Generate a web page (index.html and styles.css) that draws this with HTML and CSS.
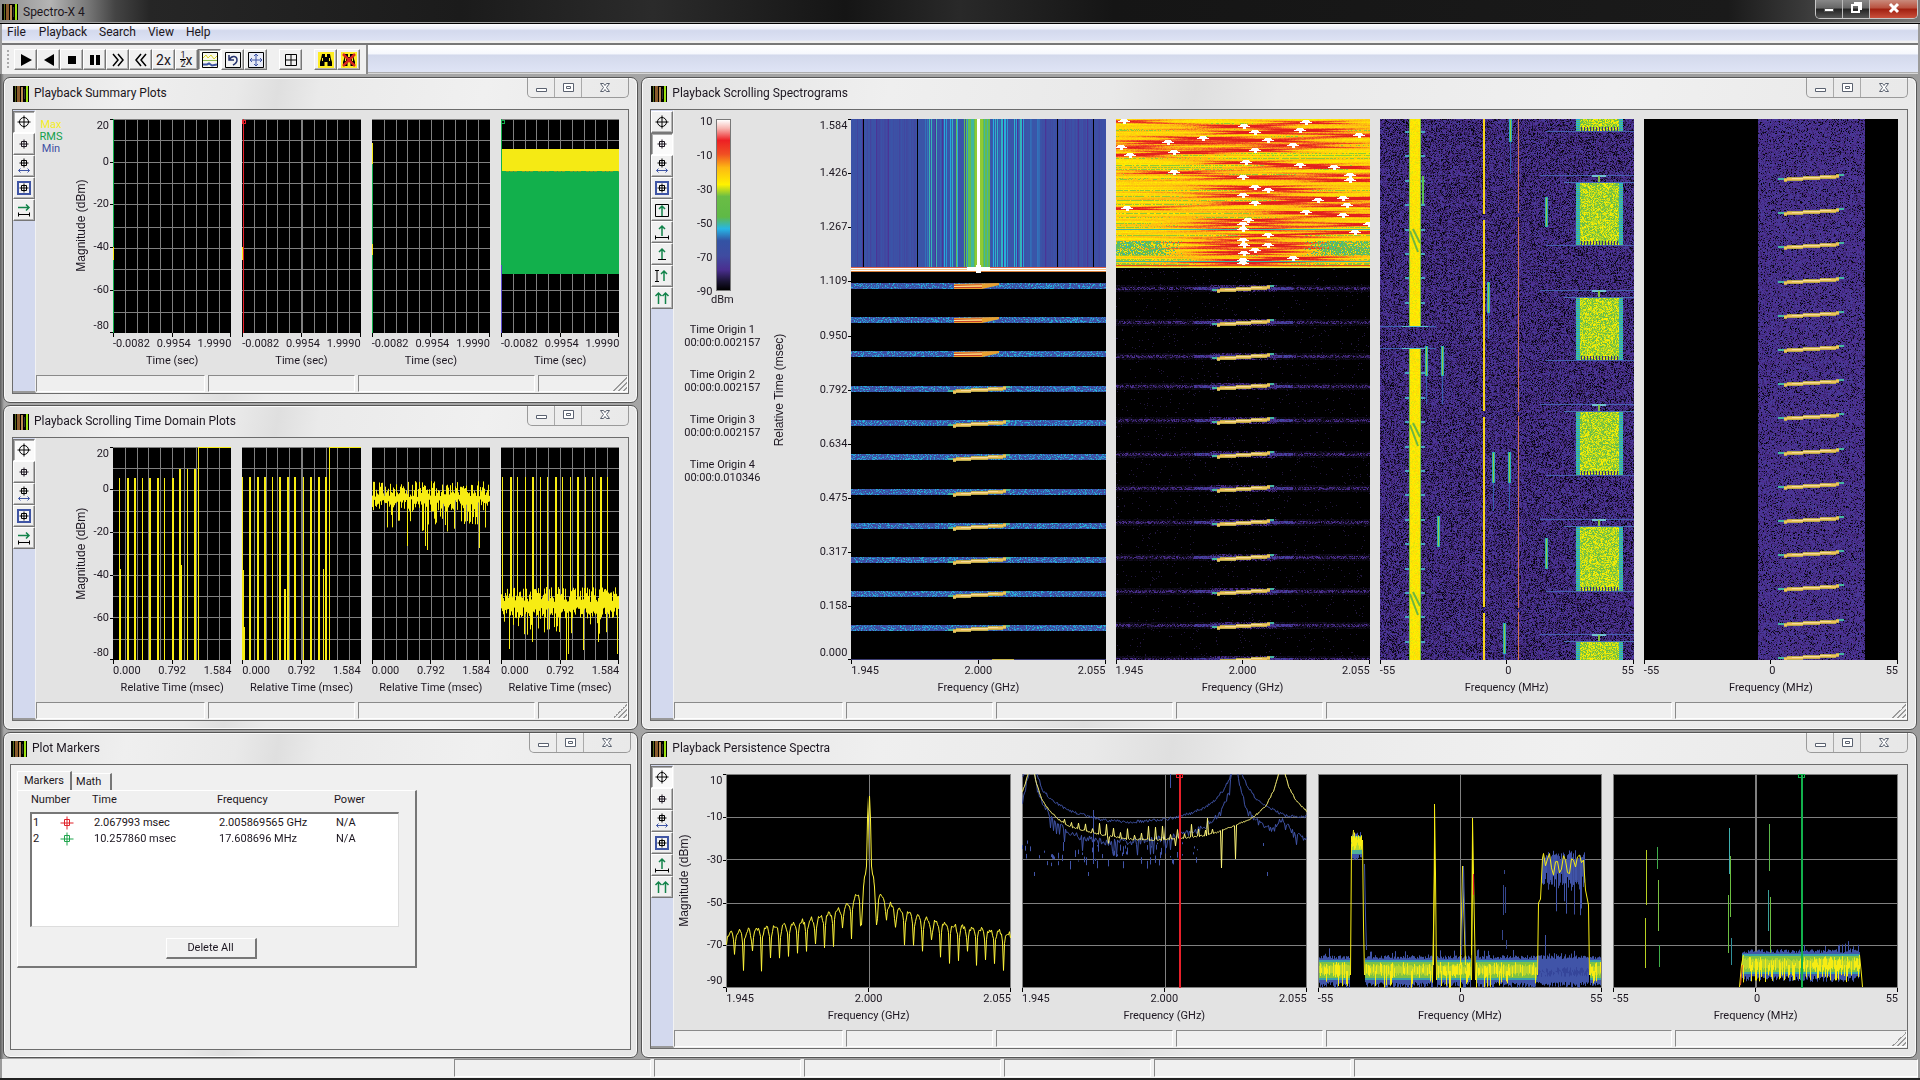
FILE: index.html
```html
<!DOCTYPE html>
<html lang="en">
<head>
<meta charset="utf-8">
<title>Spectro-X 4</title>
<link rel="stylesheet" href="styles.css">
</head>
<body>
<svg class="defs" aria-hidden="true">
  <symbol id="app" viewBox="0 0 16 16"><path fill="#000" d="M0 0h16v16H0z"/><path fill="#5a6a1c" d="M2 0h1v16H2z"/><path fill="#8a5a2c" d="M4 0h3v16H4z"/><path fill="#b98a50" d="M8 1h2v15H8z"/><path fill="#333" d="M11 3h1v10h-1z"/><path fill="#9be312" d="M13 0h2v16h-2z"/></symbol>
  <symbol id="target" viewBox="0 0 16 16"><circle cx="8" cy="8" r="4.5" fill="none" stroke="#000"/><path d="M8 1.500v13M1.500 8h13" stroke="#000"/></symbol>
  <symbol id="mark" viewBox="0 0 16 16"><path d="M5.500 5.500h5v5h-5zM8 3.500v9M3.500 8h9" stroke="currentColor" fill="none"/></symbol>
  <symbol id="marker" viewBox="0 0 16 16"><path d="M5.500 4.500h5v6h-5zM8 1.500v13M1.500 8h13" stroke="currentColor" fill="none"/></symbol>
  <symbol id="span" viewBox="0 0 16 16"><path d="M5.500 2.500h5v5h-5zM8 .5v9M3.500 5h9" stroke="#000" fill="none"/><path d="M2.500 12.500h11M4.500 10.500l-2 2 2 2M11.500 10.500l2 2-2 2" stroke="#3f55a5" fill="none"/></symbol>
  <symbol id="boxed" viewBox="0 0 16 16"><path d="M2 2h12v12H2z" fill="#f4f4f4" stroke="#3f55a5" stroke-width="2"/><path d="M5.500 5.500h5v5h-5zM8 3.500v9M3.500 8h9" stroke="#000" fill="none"/></symbol>
  <symbol id="rangex" viewBox="0 0 16 16"><path d="M2 5.500h11M10 2.500l3 3-3 3" stroke="#12834a" stroke-width="1.500" fill="none"/><path d="M2.500 10.500v4M13.500 10.500v4M2 12.500h12" stroke="#000" fill="none"/></symbol>
  <symbol id="upbox" viewBox="0 0 16 16"><path d="M1.500 2.500h13v12h-13z" stroke="#000" fill="none"/><path d="M8 14V4M5 7l3-3 3 3" stroke="#12834a" stroke-width="1.500" fill="none"/></symbol>
  <symbol id="upwide" viewBox="0 0 16 16"><path d="M1.500 11.500v4M14.500 11.500v4M1 13.500h14" stroke="#000" fill="none"/><path d="M8 12V2M5 5l3-3 3 3" stroke="#12834a" stroke-width="1.500" fill="none"/></symbol>
  <symbol id="upshort" viewBox="0 0 16 16"><path d="M4 13.500h8" stroke="#000"/><path d="M8 13V3M5 6l3-3 3 3" stroke="#12834a" stroke-width="1.500" fill="none"/></symbol>
  <symbol id="upbeam" viewBox="0 0 16 16"><path d="M1 2.500h4M3 2.500v11M1 13.500h4" stroke="#000"/><path d="M10 13V3M7 6l3-3 3 3" stroke="#12834a" stroke-width="1.500" fill="none"/></symbol>
  <symbol id="uptwo" viewBox="0 0 16 16"><path d="M4.500 14V3M1.500 6l3-3 3 3M11.500 14V3M8.500 6l3-3 3 3" stroke="#12834a" stroke-width="1.500" fill="none"/></symbol>
  <symbol id="min" viewBox="0 0 16 16"><path d="M3.500 8.500h10v3h-10z" fill="#fff" stroke="#5b6270"/></symbol>
  <symbol id="max" viewBox="0 0 16 16"><path d="M3.500 3.500h10v8h-10zM6.500 6.500h4v2h-4z" fill="#fff" stroke="#5b6270"/></symbol>
  <symbol id="close" viewBox="0 0 16 16"><path d="M3.500 3.500h3l1.500 2 1.500-2h3l-3 4 3 4h-3L8 9.500l-1.500 2h-3l3-4z" fill="#fff" stroke="#5b6270"/></symbol>
  <symbol id="binos" viewBox="0 0 16 16"><path fill="#ffed22" d="M0 0h16v16H0z"/><path d="M4 2h3v3h2V2h3l1 5 1 3v4H9.500v-4h-3v4H2v-4l1-3z"/><path fill="#ffed22" d="M4 6h1v3H4zM11 6h1v3h-1z"/></symbol>
</svg>

<div class="app">
  <header class="titlebar">
    <svg class="icon"><use href="#app"/></svg>
    <h1>Spectro-X 4</h1>
    <div class="sysbtns">
      <button aria-label="Minimize"><svg viewBox="0 0 16 16"><path d="M3.500 8.500h9v3h-9z" fill="#fff" stroke="#555"/></svg></button>
      <button aria-label="Restore"><svg viewBox="0 0 16 16"><path d="M6 3h7v7M4 5h7v7H4z" fill="none" stroke="#fff" stroke-width="2"/></svg></button>
      <button class="quit" aria-label="Close"><svg viewBox="0 0 16 16"><path d="M4 4l8 8M12 4l-8 8" stroke="#fff" stroke-width="3"/></svg></button>
    </div>
  </header>
  <nav class="menu">
    <button>File</button><button>Playback</button><button>Search</button><button>View</button><button>Help</button>
  </nav>
  <div class="toolbar">
    <div class="tools">
      <i class="grip"></i>
      <button aria-label="Play"><svg viewBox="0 0 16 16"><path d="M3 2l11 6-11 6z"/></svg></button>
      <button aria-label="Play reverse"><svg viewBox="0 0 16 16"><path d="M13 2L3 8l10 6z"/></svg></button>
      <button aria-label="Stop"><svg viewBox="0 0 16 16"><path d="M4 4h8v8H4z"/></svg></button>
      <button aria-label="Pause"><svg viewBox="0 0 16 16"><path d="M3 3h4v10H3zM9 3h4v10H9z"/></svg></button>
      <button aria-label="Forward"><svg viewBox="0 0 16 16"><path d="M3 2l5 6-5 6M8 2l5 6-5 6" fill="none" stroke="#000" stroke-width="1.500"/></svg></button>
      <button aria-label="Back"><svg viewBox="0 0 16 16"><path d="M8 2L3 8l5 6M13 2L8 8l5 6" fill="none" stroke="#000" stroke-width="1.500"/></svg></button>
      <button class="speed">2x</button>
      <button class="speed" aria-label="Half speed"><span class="frac"><span>1</span><span>2</span></span>x</button>
      <button class="on" aria-label="Plots"><svg viewBox="0 0 16 16"><path d="M.5.500h15v15H.5z" fill="#f7f7ea" stroke="#000"/><path d="M1 6l3-3 2 3 3-3 3 4 3-3" fill="none" stroke="#d8d22a"/><path d="M1 8.500h14" stroke="#89b84a"/><path d="M1 12.500h4l2-1 3 2 5-1" fill="none" stroke="#3f55a5" stroke-width="2"/></svg></button>
      <button aria-label="Undo zoom"><svg viewBox="0 0 16 16"><path d="M.5.500h15v15H.5z" fill="#f4f4f4" stroke="#000"/><path d="M4 3v5h5M4.500 7.500C7 3 12 4 12 8c0 3-2 4-4 5" fill="none" stroke="#27346f" stroke-width="1.500"/></svg></button>
      <button aria-label="Full extent"><svg viewBox="0 0 16 16"><path d="M.5.500h15v15H.5z" fill="#e8ebf6" stroke="#000"/><path d="M8 2v12M2 8h12M6 4l2-2 2 2M6 12l2 2 2-2M4 6L2 8l2 2M12 6l2 2-2 2" fill="none" stroke="#3f55a5"/></svg></button>
      <button class="apart" aria-label="Tile"><svg viewBox="0 0 16 16"><path d="M2.500 2.500h11v11h-11zM8 2v12M2 8h12" fill="none" stroke="#000"/></svg></button>
      <button class="apart" aria-label="Find"><svg><use href="#binos"/></svg></button>
      <button aria-label="Cancel find"><svg viewBox="0 0 16 16"><use href="#binos"/><path d="M2 2l12 12M14 2L2 14" stroke="#d8281e" stroke-width="2.500"/></svg></button>
    </div>
  </div>

  <main class="mdi">
    <section class="win summary">
      <header><svg class="icon"><use href="#app"/></svg><h2>Playback Summary Plots</h2>
        <div class="winbtns"><button aria-label="Minimize"><svg><use href="#min"/></svg></button><button aria-label="Maximize"><svg><use href="#max"/></svg></button><button aria-label="Close"><svg><use href="#close"/></svg></button></div></header>
      <div class="client">
        <div class="strip">
          <button class="on" aria-label="Marker mode"><svg><use href="#target"/></svg></button>
          <button aria-label="Marker"><svg><use href="#mark"/></svg></button>
          <button aria-label="Span"><svg><use href="#span"/></svg></button>
          <button aria-label="Region"><svg><use href="#boxed"/></svg></button>
          <button aria-label="Scroll"><svg><use href="#rangex"/></svg></button>
        </div>
        <div class="pane">
          <div class="chart">
            <ul class="side legend"><li class="c-max">Max</li><li class="c-rms">RMS</li><li class="c-min">Min</li></ul>
            <div class="ylabel">Magnitude (dBm)</div>
            <div class="yaxis"><span>20</span><span>0</span><span>-20</span><span>-40</span><span>-60</span><span>-80</span></div>
            <div class="plots">
              <figure><canvas id="s1" width="118" height="213"></canvas><div class="xaxis"><span>-0.0082</span><span>0.9954</span><span>1.9990</span></div><figcaption>Time (sec)</figcaption></figure>
              <figure><canvas id="s2" width="118" height="213"></canvas><div class="xaxis"><span>-0.0082</span><span>0.9954</span><span>1.9990</span></div><figcaption>Time (sec)</figcaption></figure>
              <figure><canvas id="s3" width="118" height="213"></canvas><div class="xaxis"><span>-0.0082</span><span>0.9954</span><span>1.9990</span></div><figcaption>Time (sec)</figcaption></figure>
              <figure><canvas id="s4" width="118" height="213"></canvas><div class="xaxis"><span>-0.0082</span><span>0.9954</span><span>1.9990</span></div><figcaption>Time (sec)</figcaption></figure>
            </div>
          </div>
          <div class="cells narrow"><i></i><i></i><i></i><i class="resize"></i></div>
        </div>
      </div>
    </section>

    <section class="win timedomain">
      <header><svg class="icon"><use href="#app"/></svg><h2>Playback Scrolling Time Domain Plots</h2>
        <div class="winbtns"><button aria-label="Minimize"><svg><use href="#min"/></svg></button><button aria-label="Maximize"><svg><use href="#max"/></svg></button><button aria-label="Close"><svg><use href="#close"/></svg></button></div></header>
      <div class="client">
        <div class="strip">
          <button class="on" aria-label="Marker mode"><svg><use href="#target"/></svg></button>
          <button aria-label="Marker"><svg><use href="#mark"/></svg></button>
          <button aria-label="Span"><svg><use href="#span"/></svg></button>
          <button aria-label="Region"><svg><use href="#boxed"/></svg></button>
          <button aria-label="Scroll"><svg><use href="#rangex"/></svg></button>
        </div>
        <div class="pane">
          <div class="chart">
            <div class="side"></div>
            <div class="ylabel">Magnitude (dBm)</div>
            <div class="yaxis"><span>20</span><span>0</span><span>-20</span><span>-40</span><span>-60</span><span>-80</span></div>
            <div class="plots">
              <figure><canvas id="t1" width="118" height="213"></canvas><div class="xaxis"><span>0.000</span><span>0.792</span><span>1.584</span></div><figcaption>Relative Time (msec)</figcaption></figure>
              <figure><canvas id="t2" width="118" height="213"></canvas><div class="xaxis"><span>0.000</span><span>0.792</span><span>1.584</span></div><figcaption>Relative Time (msec)</figcaption></figure>
              <figure><canvas id="t3" width="118" height="213"></canvas><div class="xaxis"><span>0.000</span><span>0.792</span><span>1.584</span></div><figcaption>Relative Time (msec)</figcaption></figure>
              <figure><canvas id="t4" width="118" height="213"></canvas><div class="xaxis"><span>0.000</span><span>0.792</span><span>1.584</span></div><figcaption>Relative Time (msec)</figcaption></figure>
            </div>
          </div>
          <div class="cells narrow"><i></i><i></i><i></i><i class="resize"></i></div>
        </div>
      </div>
    </section>

    <section class="win markers">
      <header><svg class="icon"><use href="#app"/></svg><h2>Plot Markers</h2>
        <div class="winbtns"><button aria-label="Minimize"><svg><use href="#min"/></svg></button><button aria-label="Maximize"><svg><use href="#max"/></svg></button><button aria-label="Close"><svg><use href="#close"/></svg></button></div></header>
      <div class="client form">
        <div class="tabs" role="tablist"><button role="tab" class="active" aria-selected="true">Markers</button><button role="tab">Math</button></div>
        <div class="sheet">
          <table>
            <thead><tr><th>Number</th><th></th><th>Time</th><th>Frequency</th><th>Power</th></tr></thead>
            <tbody>
              <tr><td>1</td><td><svg class="red"><use href="#marker"/></svg></td><td>2.067993 msec</td><td>2.005869565 GHz</td><td>N/A</td></tr>
              <tr><td>2</td><td><svg class="green"><use href="#marker"/></svg></td><td>10.257860 msec</td><td>17.608696 MHz</td><td>N/A</td></tr>
            </tbody>
          </table>
          <button class="push">Delete All</button>
        </div>
      </div>
    </section>

    <section class="win spectrograms">
      <header><svg class="icon"><use href="#app"/></svg><h2>Playback Scrolling Spectrograms</h2>
        <div class="winbtns"><button aria-label="Minimize"><svg><use href="#min"/></svg></button><button aria-label="Maximize"><svg><use href="#max"/></svg></button><button aria-label="Close"><svg><use href="#close"/></svg></button></div></header>
      <div class="client">
        <div class="strip">
          <button aria-label="Marker mode"><svg><use href="#target"/></svg></button>
          <button class="on" aria-label="Marker"><svg><use href="#mark"/></svg></button>
          <button aria-label="Span"><svg><use href="#span"/></svg></button>
          <button aria-label="Region"><svg><use href="#boxed"/></svg></button>
          <button aria-label="Fit time"><svg><use href="#upbox"/></svg></button>
          <button aria-label="Time range"><svg><use href="#upwide"/></svg></button>
          <button aria-label="Time origin"><svg><use href="#upshort"/></svg></button>
          <button aria-label="Time extent"><svg><use href="#upbeam"/></svg></button>
          <button aria-label="Scroll both"><svg><use href="#uptwo"/></svg></button>
        </div>
        <div class="pane">
          <div class="chart">
            <div class="side info">
              <div class="scale">
                <div class="levels"><span>10</span><span>-10</span><span>-30</span><span>-50</span><span>-70</span><span>-90</span></div>
                <div class="ramp"></div>
              </div>
              <p class="unit">dBm</p>
              <p class="origin">Time Origin 1<br>00:00:0.002157</p>
              <p class="origin">Time Origin 2<br>00:00:0.002157</p>
              <p class="origin">Time Origin 3<br>00:00:0.002157</p>
              <p class="origin">Time Origin 4<br>00:00:0.010346</p>
            </div>
            <div class="ylabel">Relative Time (msec)</div>
            <div class="yaxis"><span>1.584</span><span>1.426</span><span>1.267</span><span>1.109</span><span>0.950</span><span>0.792</span><span>0.634</span><span>0.475</span><span>0.317</span><span>0.158</span><span>0.000</span></div>
            <div class="plots">
              <figure><canvas id="g1" width="254" height="541"></canvas><div class="xaxis"><span>1.945</span><span>2.000</span><span>2.055</span></div><figcaption>Frequency (GHz)</figcaption></figure>
              <figure><canvas id="g2" width="254" height="541"></canvas><div class="xaxis"><span>1.945</span><span>2.000</span><span>2.055</span></div><figcaption>Frequency (GHz)</figcaption></figure>
              <figure><canvas id="g3" width="254" height="541"></canvas><div class="xaxis"><span>-55</span><span>0</span><span>55</span></div><figcaption>Frequency (MHz)</figcaption></figure>
              <figure><canvas id="g4" width="254" height="541"></canvas><div class="xaxis"><span>-55</span><span>0</span><span>55</span></div><figcaption>Frequency (MHz)</figcaption></figure>
            </div>
          </div>
          <div class="cells"><i></i><i></i><i></i><i></i><i></i><i class="resize"></i></div>
        </div>
      </div>
    </section>

    <section class="win persistence">
      <header><svg class="icon"><use href="#app"/></svg><h2>Playback Persistence Spectra</h2>
        <div class="winbtns"><button aria-label="Minimize"><svg><use href="#min"/></svg></button><button aria-label="Maximize"><svg><use href="#max"/></svg></button><button aria-label="Close"><svg><use href="#close"/></svg></button></div></header>
      <div class="client">
        <div class="strip">
          <button class="on" aria-label="Marker mode"><svg><use href="#target"/></svg></button>
          <button aria-label="Marker"><svg><use href="#mark"/></svg></button>
          <button aria-label="Span"><svg><use href="#span"/></svg></button>
          <button aria-label="Region"><svg><use href="#boxed"/></svg></button>
          <button aria-label="Time range"><svg><use href="#upwide"/></svg></button>
          <button aria-label="Scroll both"><svg><use href="#uptwo"/></svg></button>
        </div>
        <div class="pane">
          <div class="chart">
            <div class="ylabel">Magnitude (dBm)</div>
            <div class="yaxis"><span>10</span><span>-10</span><span>-30</span><span>-50</span><span>-70</span><span>-90</span></div>
            <div class="plots">
              <figure><canvas id="p1" width="284" height="213"></canvas><div class="xaxis"><span>1.945</span><span>2.000</span><span>2.055</span></div><figcaption>Frequency (GHz)</figcaption></figure>
              <figure><canvas id="p2" width="284" height="213"></canvas><div class="xaxis"><span>1.945</span><span>2.000</span><span>2.055</span></div><figcaption>Frequency (GHz)</figcaption></figure>
              <figure><canvas id="p3" width="284" height="213"></canvas><div class="xaxis"><span>-55</span><span>0</span><span>55</span></div><figcaption>Frequency (MHz)</figcaption></figure>
              <figure><canvas id="p4" width="284" height="213"></canvas><div class="xaxis"><span>-55</span><span>0</span><span>55</span></div><figcaption>Frequency (MHz)</figcaption></figure>
            </div>
          </div>
          <div class="cells"><i></i><i></i><i></i><i></i><i></i><i class="resize"></i></div>
        </div>
      </div>
    </section>
  </main>
  <footer class="cells status"><i></i><i></i><i></i><i></i><i></i><i></i><i></i></footer>
</div>
<script src="plots.js"></script>
</body>
</html>
```

FILE: styles.css
```css
* { box-sizing: border-box; margin: 0; padding: 0; }
html, body { height: 100%; }
body { background: #1a1a1a; font: 11px/14px Roboto, "Liberation Sans", sans-serif; color: #1c1620; }
button { font: inherit; color: inherit; border: 0; background: none; cursor: default; }
ul { list-style: none; }
h1, h2 { font-size: 12px; line-height: 16px; font-weight: 400; }
svg { width: 16px; height: 16px; display: block; flex: none; }
.defs { display: none; }

.app { display: flex; flex-direction: column; height: 100vh; min-height: 900px; min-width: 1400px; background: #9b9b9b; border-bottom: 2px solid #222; }

.titlebar { display: flex; align-items: flex-start; height: 24px; flex: none; border-bottom: 1px solid #000; box-shadow: inset 0 -1px #a0a0a0;
  background: linear-gradient(90deg, #8f8f8f 0, #b4b4b4 50px, #777 88px, #444 115px, #262626 150px, #1b1b1b 24%, #2b2b2b 34%, #151515 44%, #292929 50%, #151515 58%, #1a1a1a 90%, #3a3a3a 94%, #777 100%); }
.titlebar .icon { margin: 4px 5px 0 2px; }
.titlebar h1 { padding-top: 4px; }
.sysbtns { display: flex; margin: 0 2px 0 auto; height: 19px; border: 1px solid #c8c8c8; border-top: 0; border-radius: 0 0 5px 5px; overflow: hidden; }
.sysbtns button { width: 27px; display: flex; justify-content: center; background: linear-gradient(#888 0, #666 45%, #222 50%, #555 100%); border-right: 1px solid #bbb; }
.sysbtns .quit { width: 47px; border: 0; background: linear-gradient(#c98a7c 0, #b9503e 45%, #a01f10 50%, #c9503c 100%); }

.menu { display: flex; flex: none; height: 19px; margin: 0 2px; font-size: 12px; background: linear-gradient(#fdfdff 0, #eef0fa 25%, #d3d9ed 35%, #dde2f4 85%, #f0f0f0 90%); }
.menu button { padding: 0 6px; height: 16px; }
.menu button:first-child { padding: 0 7px 0 5px; }

.toolbar { flex: none; height: 31px; margin: 0 2px; border-top: 2px solid #777; background: linear-gradient(#fff 0, #f6f8fd 30%, #d3d9ec 35%, #dfe4f5 92%, #aaa 95%, #eee 100%); }
.tools { display: flex; align-items: center; width: 366px; height: 29px; padding: 3px 4px; background: #f0f0f0; border-right: 2px solid #8b8b8b; }
.grip { width: 2px; height: 20px; margin: 0 5px 0 1px; background: repeating-linear-gradient(#aaa 0 2px, transparent 2px 4px); }
.tools button, .strip button { display: flex; align-items: center; justify-content: center; flex: none; background: #f0f0f0; border: 1px solid; border-color: #fff #777 #777 #fff; box-shadow: inset -1px -1px #b4b4b4; }
.tools button { width: 23px; height: 21px; }
.tools .apart { margin-left: 12px; }
.tools .on, .strip .on { background: #fafafa; border-color: #777 #fff #fff #777; box-shadow: inset 1px 1px #aaa; }
.tools .speed { font-size: 14px; }
.frac { display: grid; font-size: 9px; line-height: 8px; }
.frac span + span { border-top: 1px solid #000; }

.mdi { flex: 1; min-height: 0; display: grid; grid-template-columns: 635fr 1275fr; grid-template-rows: 1fr 1fr 1fr; gap: 2px 3px; padding: 3px 3px 1px;
  grid-template-areas: "a d" "b d" "c e"; background: linear-gradient(90deg, #5b5b5b 0, #a9a9a9 4px, #9c9c9c 100%); }
.summary { grid-area: a; }
.timedomain { grid-area: b; }
.markers { grid-area: c; }
.spectrograms { grid-area: d; }
.persistence { grid-area: e; }

.win { display: flex; flex-direction: column; min-width: 0; min-height: 0; padding: 0 8px 8px; border: 1px solid #555; border-radius: 7px; box-shadow: inset 0 0 0 1px #fafafa;
  background: linear-gradient(100deg, #e2e2e2 0, #efefef 18%, #e9e9e9 34%, #dfdfdf 40%, #eaeaea 46%, #f0f0f0 70%, #e6e6e6 100%); }
.win > header { display: flex; flex: none; height: 31px; }
.win > header .icon { margin: 8px 5px 0 1px; }
.win > header h2 { padding-top: 7px; }
.winbtns { display: flex; height: 20px; margin: 0 0 0 auto; border: 1px solid #9a9a9a; border-top: 0; border-radius: 0 0 5px 5px; }
.winbtns button { width: 27px; display: flex; align-items: center; justify-content: center; border-right: 1px solid #aaa; }
.winbtns button:last-child { width: 46px; border: 0; }
.client { flex: 1; min-height: 0; display: flex; background: #e3e3e3; border: 1px solid #6c6c6c; }
.strip { flex: none; width: 23px; padding-top: 1px; background: #d3d9ee; border-right: 1px solid #f2f2f2; border-bottom: 2px solid #999; }
.strip button { width: 22px; height: 22px; }
.pane { flex: 1; min-width: 0; display: flex; flex-direction: column; }
.chart { flex: 1; min-height: 0; display: flex; padding: 9px 9px 6px 0; }
.side { flex: none; width: 38px; }
.legend { line-height: 12px; text-align: center; width: 30px; margin-right: 8px; }
.c-max { color: #f5ee1e; }
.c-rms { color: #12a04a; }
.c-min { color: #4150a4; }
.ylabel { flex: none; width: 14px; margin-bottom: 36px; font: 12px/14px "Liberation Sans", Arial, sans-serif; writing-mode: vertical-rl; rotate: 180deg; text-align: center; white-space: nowrap; }
.yaxis { flex: none; width: 25px; margin-bottom: 36px; padding-right: 4px; display: grid; grid-auto-rows: minmax(0, 1fr); grid-template-rows: minmax(0, 1fr) repeat(4, minmax(0, 2fr)) minmax(0, 1fr); text-align: right; }
.yaxis span { position: relative; align-self: center; }
.yaxis span::after { content: ""; position: absolute; right: -4px; top: 7px; width: 3px; height: 1px; background: #000; }
.yaxis span:first-child { align-self: start; }
.yaxis span:last-child { align-self: end; }
.yaxis span:first-child::after { top: 0; }
.yaxis span:last-child::after { top: 13px; }
.spectrograms .side { width: 96px; }
.spectrograms .ylabel { width: 18px; line-height: 18px; }
.spectrograms .yaxis { width: 63px; grid-template-rows: minmax(0, 1fr) repeat(9, minmax(0, 2fr)) minmax(0, 1fr); }
.persistence .ylabel { margin-left: 3px; }
.persistence .yaxis { width: 35px; }
.plots { flex: 1; min-width: 0; display: flex; gap: 11px; }
.spectrograms .plots { gap: 10px; }
.plots figure { flex: 1 1 0; min-width: 0; display: flex; flex-direction: column; }
.plots canvas { flex: 1 1 0; min-height: 0; width: 100%; display: block; background: #000; image-rendering: pixelated; }
.xaxis { flex: none; height: 20px; padding-top: 4px; display: flex; justify-content: space-between;
  background: linear-gradient(#000, #000) 0 0 / 1px 4px, linear-gradient(#000, #000) 50% 0 / 1px 4px, linear-gradient(#000, #000) 100% 0 / 1px 4px; background-repeat: no-repeat; }
.plots figcaption { flex: none; height: 16px; padding-top: 1px; text-align: center; white-space: nowrap; }

.info { text-align: center; }
.scale { display: flex; height: 172px; }
.levels { width: 38px; display: flex; flex-direction: column; justify-content: space-between; text-align: right; margin: -4px 4px -8px 0; }
.ramp { width: 15px; border: 1px solid #777; background: linear-gradient(#fff 0, #f7b5b0 5%, #ed2024 12%, #f04e23 20%, #fdb813 28%, #fff200 38%, #6abd45 45%, #5fb946 57%, #27b6e6 64%, #3353a4 71%, #3f4ba0 80%, #4a2f90 88%, #1a1433 95%, #000 100%); }
.unit { height: 32px; padding-top: 2px; }
.origin { height: 45px; line-height: 13px; }

.cells { flex: none; display: grid; height: 18px; padding: 0 0 1px; column-gap: 3px; background: #efefef; grid-template-columns: 169px 147px 177px 147px 346px 1fr; }
.cells.narrow { grid-template-columns: 169px 147px 177px 1fr; }
.cells i { border: 1px solid; border-color: #8a8a8a #fff #fff #8a8a8a; }
.cells .resize { background: linear-gradient(135deg, transparent 50%, #999 50% 57%, transparent 57% 67%, #999 67% 74%, transparent 74% 84%, #999 84% 91%, transparent 91%) 100% 100% / 14px 14px no-repeat; }
.status { margin: 0 2px; height: 19px; background: #f0f0f0; grid-template-columns: 449px 197px 147px 197px 147px 197px 1fr; }
.cells.status i:first-child { border: 0; }

.win.markers { padding: 0 6px 7px; }
.form { flex-direction: column; align-items: flex-start; padding: 6px 6px; background: #f0f0f0; }
.tabs { display: flex; align-items: flex-end; height: 19px; }
.tabs button { height: 17px; padding: 0 9px 0 4px; border-right: 2px solid #777; border-top: 1px solid #fff; }
.tabs button.active { height: 19px; padding: 0 6px; border-left: 1px solid #fff; }
.sheet { width: 400px; height: 178px; padding: 1px 16px 8px 12px; border: solid; border-width: 1px 2px 2px 1px; border-color: #fff #777 #777 #fff; text-align: center; }
.sheet table, .sheet tbody, .sheet thead { display: block; text-align: left; }
.sheet tr { display: grid; grid-template-columns: 26px 35px 125px 117px 1fr; height: 16px; align-items: center; }
.sheet thead { height: 20px; }
.sheet thead tr { padding-left: 1px; }
.sheet th { font-weight: 400; white-space: nowrap; }
.sheet tbody { height: 115px; padding: 1px 1px 1px 1px; background: #fff; border: solid; border-width: 2px 1px 1px 2px; border-color: #777 #ddd #ddd #777; }
.red { color: #e02028; }
.green { color: #1fa54c; }
.push { width: 91px; height: 21px; margin: 11px 7px 0 0; border: solid; border-width: 1px 2px 2px 1px; border-color: #fff #777 #777 #fff; background: #f0f0f0; }
```

FILE: plots.js
```js
// Seeded generator, so that the simulated data is the same at every load.
let seed = 7;
function rnd() {
  seed = (seed * 1664525 + 1013904223) >>> 0;
  return seed / 4294967296;
}
const YELLOW = '#f7ec13', GREEN = '#12b04c', BLUE = '#4054a8', GRID = '#808080', RED = '#e8202a';

function ctxOf(id) { return document.getElementById(id).getContext('2d'); }
function rect(c, color, x, y, w, h) { c.fillStyle = color; c.fillRect(x, y, w, h); }
function vline(c, color, x, y0, y1, w) { rect(c, color, x, y0, w || 1, y1 - y0); }

// Colour scale of the spectrograms, 0 = -90 dBm, 1 = 10 dBm.
const STOPS = [[0, 0, 0, 0], [.06, 26, 18, 48], [.14, 78, 46, 146], [.24, 62, 78, 164], [.32, 56, 88, 170], [.38, 35, 178, 225],
  [.46, 95, 186, 90], [.54, 106, 189, 69], [.62, 255, 240, 0], [.73, 253, 184, 19], [.82, 240, 78, 35], [.89, 225, 32, 30], [1, 255, 255, 255]];
function shade(v) {
  v = Math.max(0, Math.min(1, v));
  let i = 1;
  while (i < STOPS.length - 1 && STOPS[i][0] < v) i++;
  const a = STOPS[i - 1], b = STOPS[i], t = (v - a[0]) / (b[0] - a[0]);
  return [a[1] + (b[1] - a[1]) * t, a[2] + (b[2] - a[2]) * t, a[3] + (b[3] - a[3]) * t];
}
function paint(id, level) {
  const c = ctxOf(id), w = c.canvas.width, h = c.canvas.height, img = c.createImageData(w, h);
  for (let y = 0; y < h; y++) for (let x = 0; x < w; x++) {
    const s = shade(level(x, y)), k = (y * w + x) * 4;
    img.data[k] = s[0]; img.data[k + 1] = s[1]; img.data[k + 2] = s[2]; img.data[k + 3] = 255;
  }
  c.putImageData(img, 0, 0);
  return c;
}
// A short upward chirp, drawn as a slanted bar with cool ends.
function chirp(c, x0, x1, y) {
  const n = x1 - x0;
  for (let i = 0; i < n; i++) {
    const t = i / n, yy = Math.round(y + 2 - 4 * t), edge = Math.min(t, 1 - t);
    rect(c, edge < .08 ? '#45b5a0' : '#b8a84c', x0 + i, yy - 1, 1, edge < .08 ? 2 : 4);
    if (edge > .08) rect(c, '#eec25c', x0 + i, yy, 1, 2);
    if (edge > .2) rect(c, '#f6dc9c', x0 + i, yy, 1, 1);
  }
}

/* ---------- summary and time domain ---------- */
function grid10(c) {
  for (let i = 1; i < 10; i++) {
    vline(c, GRID, Math.round(i * 11.8), 0, 213);
    rect(c, GRID, 0, Math.round(i * 21.3), 118, 1);
  }
  rect(c, GRID, 0, 0, 118, 1);
}
function flag(c, color, x) {
  c.strokeStyle = color;
  c.strokeRect(x + .5, 1.5, 3, 3);
}
{
  let c = ctxOf('s1'); grid10(c); vline(c, GREEN, 0, 0, 213); vline(c, YELLOW, 0, 127, 140);
  c = ctxOf('s2'); grid10(c); vline(c, YELLOW, 0, 127, 140); vline(c, RED, 1, 0, 213); flag(c, RED, 0);
  c = ctxOf('s3'); grid10(c); vline(c, GREEN, 0, 45, 213); vline(c, YELLOW, 0, 24, 45); vline(c, YELLOW, 0, 124, 135);
  c = ctxOf('s4'); grid10(c);
  rect(c, '#f5ea14', 1, 30, 117, 22);
  rect(c, GREEN, 1, 52, 117, 102);
  for (let x = 1; x < 118; x += 4) if (x % 16 > 2) rect(c, '#7d9c2a', x, 52, 3, 1);
  vline(c, GREEN, 0, 0, 145); vline(c, '#5a4bd0', 0, 145, 213); flag(c, GREEN, 0);
}
{
  let c = ctxOf('t1'); grid10(c);
  for (let i = 0; i < 11; i++) vline(c, YELLOW, Math.round(6 + i * 7.5), i > 7 ? 22 : 31, 213, i % 3 ? 2 : 1);
  vline(c, YELLOW, 6, 122, 213, 2); vline(c, YELLOW, 67, 118, 213, 2);
  vline(c, YELLOW, 85, 0, 213); rect(c, YELLOW, 85, 0, 33, 1);

  c = ctxOf('t2'); grid10(c);
  for (let i = 0; i < 12; i++) vline(c, YELLOW, Math.round(i * 7.45), 30, 213, i % 4 ? 2 : 1);
  vline(c, YELLOW, 0, 123, 213, 2); vline(c, YELLOW, 2, 180, 213); vline(c, YELLOW, 42, 142, 213, 2); vline(c, YELLOW, 80, 122, 213);
  vline(c, YELLOW, 86, 0, 213); rect(c, YELLOW, 86, 0, 32, 1);

  c = ctxOf('t3'); grid10(c);
  for (let x = 0; x < 118; x++) {
    const deep = rnd() < .22 ? 6 + rnd() * 20 : 0;
    vline(c, YELLOW, x, 34 + rnd() * 16, 52 + rnd() * 13 + deep);
  }
  vline(c, YELLOW, 35, 50, 99); vline(c, YELLOW, 53, 50, 99); vline(c, YELLOW, 55, 50, 103); vline(c, YELLOW, 107, 50, 101);

  c = ctxOf('t4'); grid10(c);
  for (let x = 0; x < 118; x++) {
    const deep = rnd() < .2 ? rnd() * 20 : 0;
    vline(c, YELLOW, x, 140 + rnd() * 15, 160 + rnd() * 12 + deep);
  }
  for (let i = 0; i < 15; i++) vline(c, YELLOW, Math.round(1 + i * 7.5), 30, 160, i % 3 === 1 ? 2 : 1);
  [[8, 202], [31, 195], [65, 213], [67, 207], [82, 203], [97, 195], [116, 207]].forEach(p => vline(c, YELLOW, p[0], 160, p[1]));
}

/* ---------- spectrograms ---------- */
{
  const col = [];
  for (let x = 0; x < 254; x++) {
    const d = Math.abs(x - 127), r = rnd();
    let v = .25 + (rnd() - .5) * .08;
    if (d < 62) v = .27 + rnd() * .07;
    if (r < .75 - d / 70) v = .36 + rnd() * .05;
    if (r < .45 - d / 55) v = .46 + rnd() * .04;
    if (d < 11) v = r < .3 ? .42 : .5 + rnd() * .03;
    if (d < 4) v = .56;
    if (d > 20 && r > .92) v = .16;
    col[x] = v;
  }
  [12, 66, 205, 241].forEach(x => { col[x] = 0; });
  [78, 85, 168].forEach(x => { col[x] = .41; });
  col[126] = col[127] = 1;
  const bands = [167, 201, 235, 270, 304, 338, 373, 407, 441, 475, 509];
  const c = paint('g1', (x, y) => {
    if (y < 148) return col[x];
    if (bands.some(b => y >= b - 3 && y < b + 3)) return .2 + rnd() * .2;
    return 0;
  });
  rect(c, '#d8604a', 0, 148, 254, 1); rect(c, '#fff', 0, 149, 254, 1); rect(c, '#f4c98a', 0, 150, 254, 1); rect(c, '#fff', 0, 151, 254, 1); rect(c, '#d8803a', 0, 152, 254, 1);
  rect(c, '#fff', 116, 148, 22, 3); rect(c, '#fff', 125, 146, 4, 8);
  bands.forEach((b, i) => {
    if (i > 2) { chirp(c, 97, 158, b); return; }
    for (let x = 103; x < 147; x++) {
      const t = (x - 103) / 44, top = b - 2 - t, bot = b + 3 - Math.max(0, t - .6) * 10;
      rect(c, '#e8a030', x, top, 1, Math.max(1, bot - top));
      if (t < .6) { rect(c, '#d4502a', x, top + 1, 1, 1); rect(c, '#c8402a', x, bot - 2, 1, 1); rect(c, '#ffe9a0', x, top + 2, 1, 1); }
    }
  });
  rect(c, '#3a3a70', 0, 540, 254, 1); rect(c, '#c8b850', 140, 540, 22, 1);
}
{
  const stars = [[8, 2], [190, 3], [128, 7], [139, 13], [184, 11], [243, 16], [87, 19], [152, 21], [52, 23], [177, 26], [5, 28], [139, 31],
    [58, 33], [14, 36], [130, 43], [184, 46], [218, 48], [58, 53], [234, 56], [234, 61], [127, 58], [139, 68], [152, 71], [127, 76],
    [227, 79], [202, 81], [139, 84], [231, 86], [11, 89], [190, 93], [227, 96], [132, 101], [127, 105], [127, 110], [239, 113],
    [152, 116], [127, 121], [128, 126], [152, 126], [139, 131], [128, 134], [177, 139], [127, 141], [127, 144], [253, 105]];
  const row = [], dash = [];
  for (let y = 0; y < 149; y++) { row[y] = .62 + rnd() * .08; dash[y] = rnd() < .22; }
  const bands = [169, 203, 237, 267, 301, 335, 369, 403, 438, 472, 506, 540];
  const c = paint('g2', (x, y) => {
    if (y < 149) {
      if (y === 110 || y === 142) return .42;
      let v = row[y] + (rnd() - .5) * .05;
      for (const s of stars) {
        const dx = x - s[0], dy = y - s[1];
        if (Math.abs(dy) < 6) v += .26 / (1 + dx * dx / 1300) * Math.exp(-Math.pow(Math.abs(dy) - Math.abs(dx) / 28, 2) / 1.6);
      }
      if (v < .7 && dash[y] && rnd() < .75) v = .56;
      if (y > 121 && y < 136 && Math.abs(x - 127) > 60 + rnd() * 30 && rnd() < .75) v = .4 + rnd() * .17;
      return Math.min(v, .89);
    }
    for (const b of bands) if (Math.abs(y - b) < 4) {
      const near = Math.abs(x - 127) < 50;
      if (Math.abs(y - b) < 2) return near ? .08 + rnd() * .16 : rnd() * .16;
      return near && Math.abs(x - 127) < 34 ? rnd() * .15 : rnd() * .05;
    }
    return rnd() < .015 ? .07 : 0;
  });
  c.fillStyle = '#fff';
  stars.forEach(s => {
    c.fillRect(s[0] - 6, s[1], 12, 1); c.fillRect(s[0] - 4, s[1] - 1, 8, 2); c.fillRect(s[0] - 3, s[1] - 2, 6, 2); c.fillRect(s[0] - 1, s[1] - 2, 3, 5);
  });
  rect(c, '#e04a22', 0, 146, 254, 1); rect(c, '#d8e860', 0, 148, 254, 1);
  bands.forEach(b => chirp(c, 96, 158, b));
}
{
  const blocks = [[-52, 12], [63, 126], [178, 241], [292, 356], [407, 472], [522, 586]];
  const c = paint('g3', (x, y) => {
    for (const b of blocks) if (y >= b[0] && y < b[1]) {
      if (x >= 200 && x < 239) return y > b[1] - 5 && x % 3 === 0 ? .12 : .52 + rnd() * .11;
      if (x >= 196 && x < 243) return y % 2 ? .44 : .36 + rnd() * .04;
    }
    if (x >= 29 && x < 41 && (y < 208 || y >= 229)) return x < 30 || x > 39 ? .55 : .6 + rnd() * .07;
    return rnd() < .2 ? rnd() * .07 : .08 + rnd() * .11;
  });
  const tick = y => { rect(c, '#4aa0c0', 25, y, 4, 2); rect(c, '#4aa0c0', 41, y, 4, 2); };
  for (let i = 0; i < 8; i++) tick(Math.round(12 + i * 24.4));
  for (let i = 1; i < 13; i++) tick(Math.round(229 + i * 24.4));
  [207, 229].forEach(y => { rect(c, '#3f64b0', 0, y, 56, 1); rect(c, '#55c0d0', 22, y, 26, 1); });
  [110, 304, 473].forEach(y => {
    c.strokeStyle = '#6fb640'; c.lineWidth = 2; c.beginPath();
    c.moveTo(30, y + 2); c.lineTo(38, y + 23); c.moveTo(33, y); c.lineTo(40, y + 14); c.stroke();
  });
  rect(c, '#5cc050', 42, 57, 2, 28);
  [[0, 95], [101, 292], [298, 488], [494, 541]].forEach(s => vline(c, '#fbd81a', 103, s[0], s[1], 2));
  vline(c, '#d8744c', 138, 0, 541); [94, 293, 489].forEach(y => rect(c, '#4a2f90', 138, y, 1, 4));
  [[130, 0, 23, 55], [108, 163, 194, 220], [166, 78, 108, 108], [46, 227, 257, 285], [62, 227, 257, 285], [113, 333, 364, 392], [129, 333, 364, 392],
    [58, 397, 428, 428], [166, 419, 450, 450], [124, 504, 535, 541]].forEach(s => {
    vline(c, '#3560b0', s[0], s[2], s[3]);
    vline(c, '#2cb0b8', s[0] - 1, s[1], s[2], 3);
    vline(c, '#8cc63f', s[0], s[1] + 1, s[2] - 1, 1);
  });
  blocks.forEach(b => {
    rect(c, '#4560b0', 160, b[0] - 7, 94, 1); rect(c, '#6fc0d0', 212, b[0] - 7, 14, 2); rect(c, '#80c040', 218, b[0] - 6, 2, 6);
    rect(c, '#4a70b8', 184, b[0], 70, 1); rect(c, '#4560b0', 166, b[1], 88, 1);
  });
}
{
  const c = paint('g4', x => x >= 114 && x < 221 ? (rnd() < .13 ? rnd() * .07 : .1 + rnd() * .09) : 0);
  for (let k = 0; k < 15; k++) chirp(c, 134, 200, Math.round(58 + k * 34.2));
}

/* ---------- persistence spectra ---------- */
function frame(c) {
  [43, 85, 128, 170].forEach(y => rect(c, GRID, 0, y, 284, 1));
  vline(c, GRID, 142, 0, 213);
  c.strokeStyle = GRID; c.lineWidth = 1; c.strokeRect(.5, .5, 283, 212);
}
function trace(c, color, f, x0, x1) {
  c.strokeStyle = color; c.lineWidth = 1; c.beginPath();
  for (let x = x0; x <= x1; x++) c.lineTo(x + .5, f(x));
  c.stroke();
}
function through(points) {
  return x => {
    let i = 1;
    while (i < points.length - 1 && points[i][0] < x) i++;
    const a = points[i - 1], b = points[i];
    return a[1] + (b[1] - a[1]) * (x - a[0]) / (b[0] - a[0]);
  };
}
{
  const c = ctxOf('p1'); frame(c);
  const depth = [];
  for (let i = 0; i < 34; i++) depth[i] = 18 + rnd() * 24;
  trace(c, '#fff53a', x => {
    const d = Math.abs(x - 142);
    if (d < 1) return 22;
    if (d < 8) return [22, 45, 92, 100, 103, 112, 132, 150][Math.floor(d)];
    const env = 119 + 38 * Math.log(d / 12) / Math.log(140 / 12);
    const s = Math.abs(Math.sin(Math.PI * (d - 8) / 9));
    const n = depth[Math.round((x - 8) / 9 + .5) % 34] || 30;
    return env + Math.min(n, -22 * Math.log10(s + .002)) + rnd() * 5 - 2;
  }, 0, 283);
}
{
  const c = ctxOf('p2'); frame(c);
  const up = through([[0, 4], [3, -5], [13, -5], [20, 16], [30, 27], [45, 36], [65, 42], [80, 46], [105, 48], [140, 46], [165, 40], [180, 34], [190, 28], [200, 16], [206, 5], [208, -6], [216, -6], [224, 12], [232, 24], [245, 33], [262, 42], [283, 43]]);
  const low = through([[0, 28], [4, 10], [7, -5], [11, -5], [15, 16], [22, 34], [32, 44], [44, 58], [60, 64], [85, 68], [110, 68], [140, 65], [170, 58], [185, 50], [197, 40], [204, 22], [208, 0], [210, -6], [213, -6], [217, 15], [224, 38], [235, 48], [250, 55], [256, 48], [262, 46], [270, 60], [283, 66]]);
  trace(c, BLUE, x => up(x) + (rnd() - .5) * 3, 0, 283);
  trace(c, BLUE, x => low(x) + (rnd() - .5) * 7 + (rnd() < .06 ? 12 : 0), 0, 283);
  for (let i = 0; i < 70; i++) {
    const x = rnd() * 175, y = x < 40 ? 66 + rnd() * 26 : 68 + rnd() * 20;
    vline(c, BLUE, Math.floor(x), y, y + 1 + rnd() * 7);
  }
  [[66, 98], [12, 98], [244, 98]].forEach(p => vline(c, BLUE, p[0], p[1], p[1] + 4));
  vline(c, BLUE, 71, 36, 90); vline(c, BLUE, 147, 0, 14); vline(c, BLUE, 240, 69, 72);
  const main = through([[0, 18], [5, 2], [7, -5], [11, -5], [14, 10], [20, 27], [28, 38], [37, 46], [46, 52], [60, 56], [80, 61], [105, 65], [135, 66], [160, 64], [185, 61], [205, 54], [225, 46], [235, 39], [243, 31], [250, 17], [255, 0], [257, -6], [260, -6], [265, 12], [272, 26], [283, 37]]);
  trace(c, '#fff67a', x => {
    if (x === 198) return 94;
    if (x === 212) return 85;
    if (x === 184) return 44;
    let v = main(x) + (rnd() - .5) * 1.5;
    if (x > 36 && x < 190 && Math.floor(x) % 7 === 0) v -= 3 + rnd() * 11;
    if (x > 85 && x < 180 && rnd() < .04) v += 8;
    return v;
  }, 0, 283);
  vline(c, RED, 156, 0, 213, 2); c.strokeStyle = RED; c.strokeRect(153.5, .5, 6, 3);
}
// Yellow-green noise floor with cool fringes, as wide as [x0, x1).
function floor(c, x0, x1, mid, cool) {
  for (let x = x0; x < x1; x++) {
    vline(c, BLUE, x, mid - 12 - rnd() * (rnd() < .15 ? 12 : 4), mid + 11 + rnd() * 6);
    if (cool) { vline(c, '#35459a', x, mid - 4 + rnd() * 6, mid + rnd() * 6); continue; }
    vline(c, '#3aa0a8', x, mid - 11, mid + 9);
    vline(c, '#7fc241', x, mid - 9, mid + 7);
    vline(c, '#b8d430', x, mid - 4 - rnd() * 3, mid + 2 + rnd() * 3);
    if (rnd() < .5) vline(c, YELLOW, x, mid - 2 - rnd() * 7, mid + 1 + rnd() * 6);
    if (rnd() < .2) vline(c, YELLOW, x, mid, mid + 10 + rnd() * 8);
  }
}
function line(c, color, pts) {
  c.strokeStyle = color; c.lineWidth = 1; c.beginPath();
  pts.forEach(p => c.lineTo(p[0] + .5, p[1]));
  c.stroke();
}
{
  const c = ctxOf('p3'); frame(c);
  floor(c, 1, 32, 196); floor(c, 47, 115, 196); floor(c, 119, 153, 196); floor(c, 158, 219, 196);
  floor(c, 219, 271, 196, true); floor(c, 272, 283, 196);
  for (let x = 33; x < 44; x++) {
    vline(c, BLUE, x, 58 + rnd() * 6, 80 + rnd() * 6); vline(c, '#4fb09a', x, 62, 80); vline(c, '#b8d830', x, 63, 76); vline(c, YELLOW, x, 58 + rnd() * 8, 68 + rnd() * 9);
  }
  line(c, YELLOW, [[32, 200], [33, 70]]); line(c, YELLOW, [[34, 68], [35, 56]]); line(c, YELLOW, [[44, 66], [45, 150], [46, 200]]);
  line(c, BLUE, [[46, 90], [47, 140], [48, 175]]);
  line(c, YELLOW, [[114, 205], [116, 100], [116, 30], [117, 100], [118, 205]]); line(c, YELLOW, [[115, 190], [116, 60]]);
  line(c, YELLOW, [[142, 190], [144, 92], [145, 125], [147, 190]]); line(c, BLUE, [[143, 180], [145, 92], [147, 170]]);
  line(c, YELLOW, [[153, 205], [154, 100], [154, 44], [155, 100], [157, 205]]); line(c, YELLOW, [[153, 180], [154, 55]]); line(c, RED, [[155, 100], [155, 120]]);
  [[185, 110, 140], [187, 112, 138], [184, 155, 165], [188, 165, 174], [186, 96, 100]].forEach(s => vline(c, '#35468c', s[0], s[1], s[2]));
  for (let x = 224; x < 267; x++) vline(c, rnd() < .7 ? BLUE : '#3a4a98', x, 76 + rnd() * 10, 98 + rnd() * (rnd() < .25 ? 45 : 18));
  const top = [[219, 200], [220, 128], [222, 124], [224, 84]];
  for (let x = 225; x < 265; x += 2) top.push([x, 76 + rnd() * 26]);
  top.push([265, 86], [267, 115], [270, 130], [271, 200]);
  line(c, YELLOW, top);
  vline(c, BLUE, 227, 160, 200);
}
{
  const c = ctxOf('p4'); frame(c);
  floor(c, 129, 246, 190);
  line(c, YELLOW, [[126, 212], [128, 190], [130, 180]]); line(c, YELLOW, [[245, 180], [247, 200], [248, 212]]); line(c, '#e85a20', [[127, 210], [129, 190]]);
  [['#b8d020', 33, 76, 130], ['#b8d020', 32, 143, 193], ['#3fae4a', 44, 73, 95], ['#7cc242', 45, 106, 156], ['#3fae4a', 46, 170, 192],
    ['#3fb0b0', 116, 54, 100], ['#6cbf42', 115, 120, 178], ['#6cbf42', 117, 82, 142], ['#2f8f9a', 118, 163, 190],
    ['#5cb84a', 155, 50, 97], ['#3aa09a', 154, 115, 156], ['#6cbf42', 156, 122, 178]].forEach(s => vline(c, s[0], s[1], s[2], s[3]));
  vline(c, GREEN, 187, 0, 213, 2); c.strokeStyle = GREEN; c.strokeRect(184.5, .5, 6, 3);
}
```
